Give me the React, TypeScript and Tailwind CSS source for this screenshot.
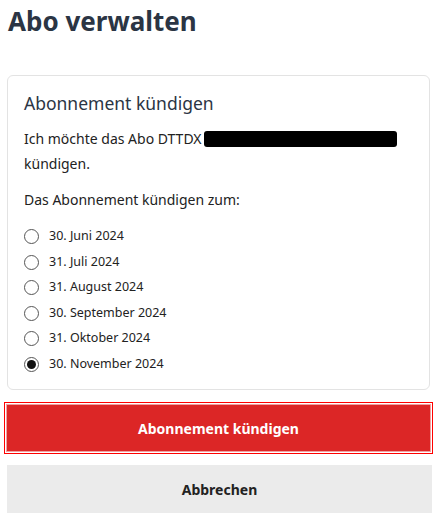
import React from "react";

const dates = [
  "30. Juni 2024",
  "31. Juli 2024",
  "31. August 2024",
  "30. September 2024",
  "31. Oktober 2024",
  "30. November 2024",
];

export default function App() {
  return (
    <div className="w-[437px] h-[518px] bg-white px-[7px] text-[#222]" style={{ fontFamily: '"Noto Sans", "Open Sans", sans-serif' }}>
      <h1 className="pt-[3px] text-[26px] leading-[36px] font-bold text-[#2b3544] pl-px">Abo verwalten</h1>
      <div className="mt-[36px] rounded-md border border-[#e3e3e3] px-4 pt-[14px] pb-[12px]">
        <h2 className="text-[17.5px] leading-[26px] text-[#2b3544]">Abonnement kündigen</h2>
        <p className="mt-[10px] text-[14px] leading-[25px]">
          Ich möchte das Abo DTTDX
          <span className="inline-block align-middle ml-[2px] w-[193px] h-[16px] bg-black rounded-[3px] -mt-[2px]" />
          <br />
          kündigen.
        </p>
        <p className="mt-[14px] text-[14px] leading-[20px]">Das Abonnement kündigen zum:</p>
        <div className="mt-[14px] flex flex-col">
          {dates.map((d, i) => (
            <label key={d} className="flex items-center h-[25.5px] text-[12.5px]">
              <span className="w-[15px] h-[15px] rounded-full border border-[#555] flex items-center justify-center bg-white">
                {i === 5 && <span className="w-[9px] h-[9px] rounded-full bg-[#111]" />}
              </span>
              <span className="ml-[10px] text-[#222]">{d}</span>
            </label>
          ))}
        </div>
      </div>
      <div className="mt-[12px] -mx-[3px] border border-[#ff0000] p-px">
        <button className="w-full h-[48px] bg-[#dc2626] text-white font-bold text-[14px] border border-[#f0a0a0]">
          Abonnement kündigen
        </button>
      </div>
      <button className="mt-[11px] w-[425px] h-[48px] bg-[#ebebeb] text-[#222] font-bold text-[14px]">Abbrechen</button>
    </div>
  );
}
